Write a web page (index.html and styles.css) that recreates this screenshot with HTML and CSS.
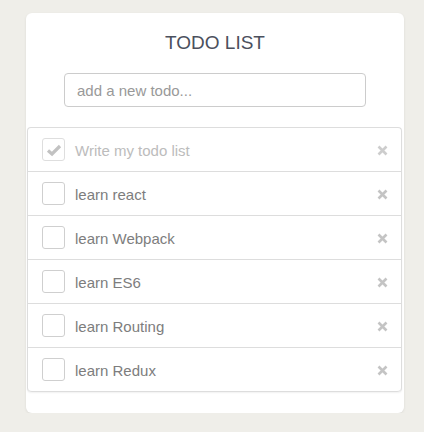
FILE: index.html
```html
<!DOCTYPE html>
<html>
<head>
<meta charset="utf-8">
<link rel="stylesheet" href="styles.css">
</head>
<body>
<div class="card">
  <h1 class="title">TODO LIST</h1>
  <div class="new-row"><input class="new-todo" type="text" placeholder="add a new todo..."></div>
  <ul class="list">
    <li class="item done">
      <span class="box"><svg width="16" height="14" viewBox="0 0 16 14"><path d="M2 7.5 L6 11 L14 3" fill="none" stroke="#c2c2c2" stroke-width="3.2"/></svg></span>
      <span class="label">Write my todo list</span>
      <span class="del"><svg width="11" height="11" viewBox="0 0 11 11"><path d="M1.5 1.5 L9.5 9.5 M9.5 1.5 L1.5 9.5" stroke="#cdcdcd" stroke-width="2.6"/></svg></span>
    </li>
    <li class="item">
      <span class="box"></span>
      <span class="label">learn react</span>
      <span class="del"><svg width="11" height="11" viewBox="0 0 11 11"><path d="M1.5 1.5 L9.5 9.5 M9.5 1.5 L1.5 9.5" stroke="#c4c4c4" stroke-width="2.6"/></svg></span>
    </li>
    <li class="item">
      <span class="box"></span>
      <span class="label">learn Webpack</span>
      <span class="del"><svg width="11" height="11" viewBox="0 0 11 11"><path d="M1.5 1.5 L9.5 9.5 M9.5 1.5 L1.5 9.5" stroke="#c4c4c4" stroke-width="2.6"/></svg></span>
    </li>
    <li class="item">
      <span class="box"></span>
      <span class="label">learn ES6</span>
      <span class="del"><svg width="11" height="11" viewBox="0 0 11 11"><path d="M1.5 1.5 L9.5 9.5 M9.5 1.5 L1.5 9.5" stroke="#c4c4c4" stroke-width="2.6"/></svg></span>
    </li>
    <li class="item">
      <span class="box"></span>
      <span class="label">learn Routing</span>
      <span class="del"><svg width="11" height="11" viewBox="0 0 11 11"><path d="M1.5 1.5 L9.5 9.5 M9.5 1.5 L1.5 9.5" stroke="#c4c4c4" stroke-width="2.6"/></svg></span>
    </li>
    <li class="item">
      <span class="box"></span>
      <span class="label">learn Redux</span>
      <span class="del"><svg width="11" height="11" viewBox="0 0 11 11"><path d="M1.5 1.5 L9.5 9.5 M9.5 1.5 L1.5 9.5" stroke="#c4c4c4" stroke-width="2.6"/></svg></span>
    </li>
  </ul>
</div>
</body>
</html>
```

FILE: styles.css
```css
html, body {
  margin: 0;
  padding: 0;
  background: #efeee9;
  font-family: "Liberation Sans", Arial, sans-serif;
}
.card {
  width: 378px;
  margin: 13px 0 0 26px;
  background: #fff;
  border-radius: 6px;
  box-shadow: 0 1px 3px rgba(0,0,0,0.08);
  padding: 19px 0 21px;
  box-sizing: border-box;
}
.title {
  margin: 0;
  font-size: 19px;
  line-height: 22px;
  font-weight: normal;
  color: #4b505d;
  text-align: center;
}
.new-row {
  display: flex;
  justify-content: center;
  margin-top: 19px;
}
.new-todo {
  width: 302px;
  height: 34px;
  box-sizing: border-box;
  border: 1px solid #cccccc;
  border-radius: 4px;
  padding: 0 12px;
  font-family: "Liberation Sans", Arial, sans-serif;
  font-size: 15px;
  color: #555;
  outline: none;
}
.new-todo::placeholder {
  color: #999;
}
.list {
  list-style: none;
  margin: 20px 2px 0 1px;
  padding: 0;
  border: 1px solid #dddddd;
  border-bottom: none;
  border-radius: 4px;
  box-shadow: 0 1px 2px rgba(0,0,0,0.06);
}
.item {
  display: flex;
  align-items: center;
  height: 43px;
  border-bottom: 1px solid #dddddd;
  padding: 0 13px 0 14px;
}
.item:last-child {
  border-radius: 0 0 4px 4px;
}
.box {
  width: 23px;
  height: 23px;
  box-sizing: border-box;
  border: 1px solid #cfcfcf;
  border-radius: 3px;
  display: flex;
  align-items: center;
  justify-content: center;
  flex: none;
}
.done .box {
  border-color: #dedede;
}
.label {
  flex: 1;
  margin-left: 10px;
  padding-top: 2px;
  font-size: 15px;
  color: #7d7d7d;
}
.done .label {
  color: #bcbcbc;
}
.del {
  display: flex;
  width: 11px;
  height: 11px;
  margin-top: 1px;
}
```
